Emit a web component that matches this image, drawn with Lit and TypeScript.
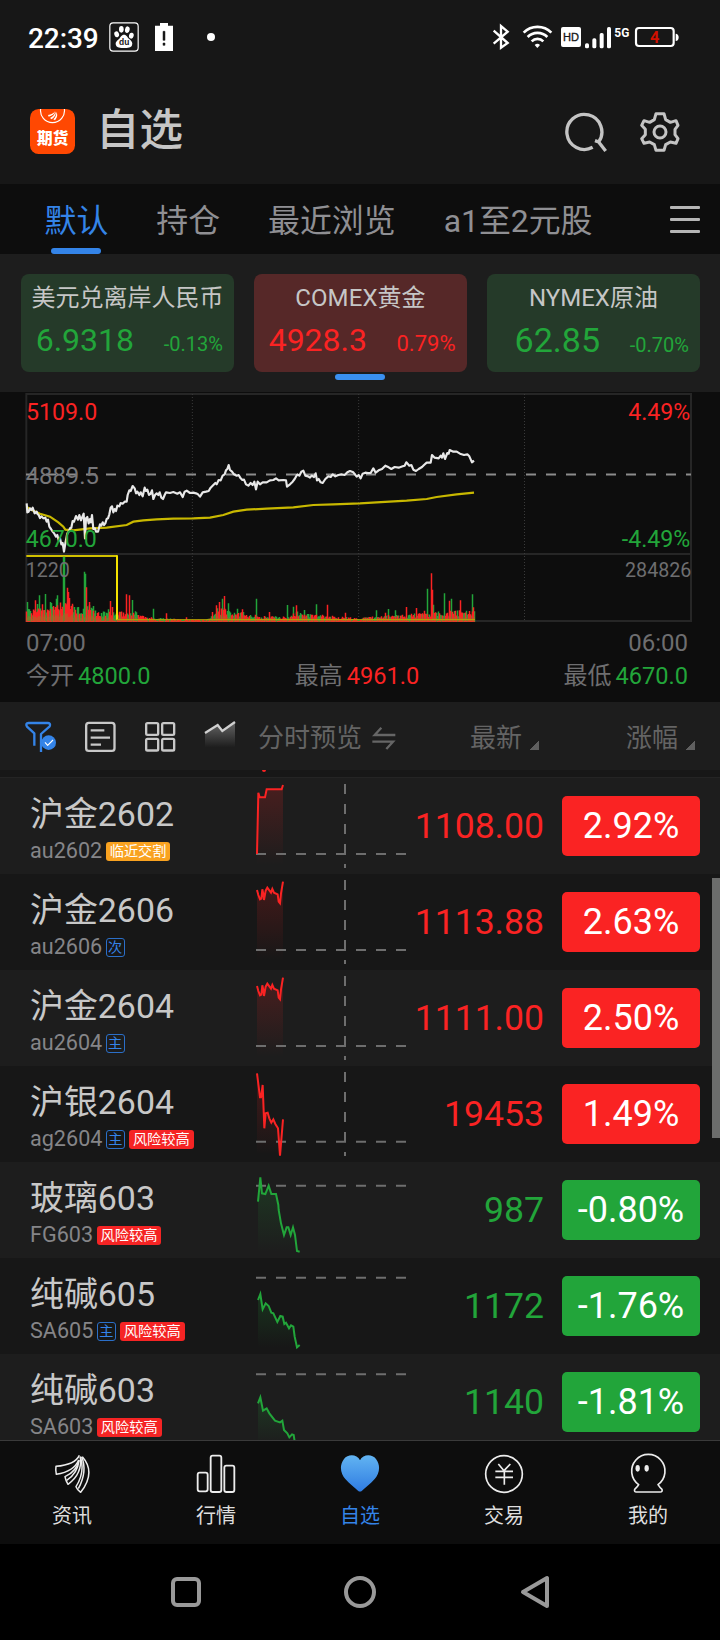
import { LitElement, html, svg, css } from "lit";
import { customElement, property } from "lit/decorators.js";

const RED = "#fa2323";
const GREEN = "#22a53a";

const fontBase = css`
  :host {
    font-family: Roboto, "Noto Sans CJK SC", sans-serif;
    -webkit-font-smoothing: antialiased;
  }
  * { box-sizing: border-box; }
  svg { display: block; flex: none; }
`;

/* ---------- status bar ---------- */
@customElement("status-bar")
export class StatusBar extends LitElement {
  static styles = [fontBase, css`
    :host { display: flex; align-items: center; height: 74px; padding: 0 40px 0 28px; color: #fff; }
    .time { font-size: 28px; font-weight: 500; line-height: 40px; width: 81px; padding-top: 3px; letter-spacing: -0.1px; }
    .right { margin: 2px 0 0 auto; }
    .word { font-family: "Liberation Sans", sans-serif; }
    .cell { font-family: Roboto, sans-serif; font-weight: 700; }
  `];
  render() {
    return html`
      <span class="time">22:39</span>
      <svg width="30" height="30" viewBox="327 66 90 90">
        <rect x="329.500" y="68.500" width="85" height="85" rx="10" fill="none" stroke="#fff" stroke-width="3.500"></rect>
        <g fill="#fff">
          <ellipse cx="350" cy="103" rx="7" ry="9" transform="rotate(-18 350 103)"></ellipse>
          <ellipse cx="364" cy="88" rx="7" ry="10"></ellipse>
          <ellipse cx="382" cy="89" rx="7" ry="10" transform="rotate(10 382 89)"></ellipse>
          <ellipse cx="394" cy="107" rx="7" ry="9" transform="rotate(15 394 107)"></ellipse>
          <path d="M372 104c8 0 10 8 16 13 7 6 11 11 8 19-3 8-12 8-24 8s-21 0-24-8c-3-8 2-13 8-18 6-6 8-14 16-14z"></path>
        </g>
        <text class="word" x="357" y="135" font-size="25" font-weight="700" fill="#171717" textLength="31" lengthAdjust="spacingAndGlyphs">du</text>
      </svg>
      <svg width="80" height="30" viewBox="417 66 240 90">
        <path d="M465 77h15v-8h24v8h15v76h-54z" fill="#fff"></path>
        <path d="M489 94h6v27h-6zM489 129h6v7h-6z" fill="#171717" stroke="#171717" stroke-width="1.500"></path>
        <circle cx="633" cy="111" r="12" fill="#fff"></circle>
      </svg>
      <svg class="right" width="188" height="32" viewBox="396 66 564 96">
        <path d="M401 92 443 129 423 143V78l20 17-42 36" fill="none" stroke="#fff" stroke-width="7"></path>
        <g fill="none" stroke="#fff" stroke-width="8">
          <path d="M491 98a58 58 0 0 1 83 0"></path>
          <path d="M503 111a41 41 0 0 1 59 0"></path>
          <path d="M515 124a25 25 0 0 1 35 0"></path>
        </g>
        <path d="M532 144l-8-9a12 12 0 0 1 16 0z" fill="#fff"></path>
        <rect x="603" y="81" width="60" height="60" rx="6" fill="#fff"></rect>
        <text class="word" x="609" y="124" font-size="35" fill="#171717" stroke="#171717" stroke-width="1" textLength="48" lengthAdjust="spacingAndGlyphs">HD</text>
        <g fill="#fff">
          <rect x="675" y="130" width="12" height="15" rx="5"></rect>
          <rect x="697" y="115" width="12" height="30" rx="5"></rect>
          <rect x="719" y="99" width="12" height="46" rx="5"></rect>
          <rect x="741" y="81" width="12" height="64" rx="5"></rect>
        </g>
        <text class="cell" x="763" y="111" font-size="41" fill="#fff" textLength="45" lengthAdjust="spacingAndGlyphs">5G</text>
        <rect x="828" y="84" width="113" height="54" rx="9" fill="none" stroke="#fff" stroke-width="6.500"></rect>
        <path d="M947 101c12 0 12 22 0 22z" fill="#fff"></path>
        <text class="cell" x="870" y="129" font-size="49" fill="#d01000">4</text>
      </svg>`;
  }
}

/* ---------- title bar ---------- */
@customElement("title-bar")
export class TitleBar extends LitElement {
  static styles = [fontBase, css`
    :host { display: flex; align-items: center; height: 110px; padding: 0 39px 0 30px; }
    .logo { margin-top: 5px; }
    .seal { font-family: "Noto Sans CJK SC", sans-serif; font-weight: 900; }
    h1 { margin: 3px 0 0 21px; font-size: 43.500px; line-height: 60px; font-weight: 500; color: #c6c6c6; }
    .tools { margin: 6px 0 0 auto; display: flex; gap: 32px; }
  `];
  render() {
    return html`
      <svg class="logo" width="45" height="45" viewBox="90 327 135 135">
        <rect x="90" y="327" width="135" height="135" rx="26" fill="#ff4802"></rect>
        <path d="M122 326a36 36 0 1 0 71 0" fill="none" stroke="#fff" stroke-width="3.500"></path>
        <path d="M144 345q14-1 21-11-3 13-19 16zM150 354q14-6 17-20 2 14-12 24zM160 358q10-10 9-23 7 11-4 26z" fill="#fff"></path>
        <text class="seal" x="111" y="433" font-size="47" fill="#fff">期货</text>
      </svg>
      <h1>自选</h1>
      <div class="tools">
        <svg width="42" height="42" viewBox="613 333 126 126" fill="none" stroke="#c4c4c4" stroke-width="10">
          <path d="M696 442a52.500 52.500 0 1 1 18-16M703 422l11 4 21 27" stroke-linejoin="round"></path>
        </svg>
        <svg width="42" height="42" viewBox="837 333 126 126" fill="none" stroke="#c4c4c4" stroke-width="9" stroke-linejoin="round">
          <path d="M888 341h24l5 18 14 8 17-5 6 14-9 12v16l9 12-6 14-17-4-14 8-5 17h-24l-5-17-14-8-17 4-7-14 11-12v-16l-11-12 7-14 17 5 14-8z"></path>
          <circle cx="900" cy="396" r="18"></circle>
        </svg>
      </div>`;
  }
}

/* ---------- group tabs ---------- */
@customElement("group-tabs")
export class GroupTabs extends LitElement {
  static styles = [fontBase, css`
    :host { display: flex; height: 70px; background: #0d0d0d; padding: 0 20px 0 20.500px; }
    .tab { display: flex; flex-direction: column; align-items: center; justify-content: flex-end; padding: 0 24px; font-size: 31.900px; color: #8f8f93; }
    .tab span { line-height: 46px; white-space: nowrap; }
    .bar { width: 50px; height: 6px; border-radius: 3px; margin-top: 4px; }
    .on { color: #3484e8; }
    .on .bar { background: #3484e8; }
    .menu { margin: 22px 0 0 auto; display: grid; gap: 9px; align-content: start; }
    .menu i { display: block; width: 30px; height: 3px; border-radius: 1px; background: #b5b5b5; }
  `];
  render() {
    const tabs = ["默认", "持仓", "最近浏览", "a1至2元股"];
    return html`
      ${tabs.map((t, i) => html`<div class="tab ${i === 0 ? "on" : ""}"><span>${t}</span><div class="bar"></div></div>`)}
      <div class="menu"><i></i><i></i><i></i></div>`;
  }
}

/* ---------- market cards ---------- */
@customElement("market-cards")
export class MarketCards extends LitElement {
  static styles = [fontBase, css`
    :host { display: grid; grid-template-columns: repeat(3, 213px); column-gap: 20px; height: 138px; padding: 20px 20px 0 21px; background: #1d1d1d; align-content: start; }
    .card { height: 98px; border-radius: 8px; padding-top: 4px; }
    .card.down { background: #253a29; color: #22a53a; }
    .card.up { background: #562828; color: #fa2323; }
    .title { text-align: center; font-size: 24px; line-height: 40px; color: #c6c6c6; white-space: nowrap; }
    .up .title { letter-spacing: 0.100px; }
    .row { display: flex; align-items: baseline; justify-content: space-between; margin-top: 2px; padding-right: 11px; line-height: 40px; }
    .up .row { padding-right: 11.500px; }
    .value { width: 113px; text-align: right; font-size: 32px; }
    .pct { font-size: 20px; }
    .big { font-size: 34px; }
    .mid { font-size: 22px; }
    .bar { grid-column: 2; justify-self: center; width: 50px; height: 6px; border-radius: 3px; background: #3a90f0; margin: 2px 1px 0 0; }
  `];
  render() {
    return html`
      <div class="card down"><div class="title">美元兑离岸人民币</div>
        <div class="row"><span class="value">6.9318</span><span class="pct">-0.13%</span></div></div>
      <div class="card up"><div class="title">COMEX黄金</div>
        <div class="row"><span class="value">4928.3</span><span class="pct mid">0.79%</span></div></div>
      <div class="card down"><div class="title">NYMEX原油</div>
        <div class="row"><span class="value big">62.85</span><span class="pct">-0.70%</span></div></div>
      <div class="bar"></div>`;
  }
}

/* ---------- intraday chart ---------- */
// Plot coordinates: three units per pixel, origin at the left edge of the page.
const PRICE = "80,355 82,382 86,380 90,370 94,375 98,368 104,385 110,380 112,386 116,390 120,399 124,394 130,400 136,398 140,410 144,404 148,425 153,432 158,440 163,446 168,455 172,450 176,466 180,460 184,478 188,474 192,500 196,475 198,465 202,445 206,440 210,430 214,428 218,408 222,410 228,393 234,404 238,390 243,406 246,398 251,386 255,460 258,400 262,396 266,415 270,402 273,412 276,390 280,432 285,430 288,440 294,440 300,418 304,422 308,412 312,420 316,415 320,402 324,400 328,388 332,368 336,364 340,382 344,372 348,378 352,362 358,364 362,354 368,356 374,350 380,350 383,330 388,316 392,318 398,303 404,310 408,325 412,320 418,330 422,322 428,334 434,308 438,318 442,314 447,330 452,326 456,316 460,342 465,330 470,325 475,330 479,322 484,338 489,342 494,330 498,322 510,324 520,321 532,326 540,322 548,336 554,320 560,317 570,324 580,323 588,325 594,328 600,335 608,322 618,320 626,318 632,308 640,300 646,294 650,298 656,285 662,286 668,272 674,268 678,256 682,252 686,240 690,255 696,260 702,268 710,272 716,270 722,280 727,285 732,284 738,298 745,302 752,294 758,300 763,290 768,313 773,290 780,298 788,292 800,292 810,286 820,285 828,280 836,286 850,285 858,286 861,305 870,298 878,290 884,282 892,268 898,272 904,260 910,257 916,272 924,274 930,278 935,272 942,276 947,265 951,286 956,282 962,292 968,294 976,282 985,274 992,276 998,268 1006,274 1015,270 1024,268 1034,270 1042,262 1050,258 1060,262 1070,275 1076,270 1082,280 1088,266 1096,263 1104,264 1112,264 1120,250 1127,263 1136,256 1146,252 1156,242 1166,247 1174,252 1184,246 1196,248 1208,244 1214,242 1219,232 1228,242 1234,240 1240,254 1248,258 1256,252 1266,246 1272,240 1280,233 1292,233 1296,210 1304,218 1316,220 1322,212 1326,218 1330,205 1335,222 1342,204 1346,206 1349,195 1360,200 1370,200 1380,206 1392,210 1402,208 1408,214 1416,232 1422,227";
const AVERAGE = "80,366 100,377 120,386 150,395 175,412 190,425 196,434 220,436 270,430 320,428 380,420 400,410 430,406 470,403 520,401 580,400 630,398 670,390 700,380 740,374 800,371 880,367 940,360 1000,358 1080,355 1130,352 1220,347 1280,342 1310,336 1370,328 1422,323";

const ENVELOPE: [number, number][] = [
  [78, 45], [100, 35], [120, 55], [160, 56], [190, 64], [215, 52], [250, 38], [270, 50], [300, 27], [330, 38], [350, 30], [380, 30],
  [410, 32], [440, 14], [500, 13], [560, 6], [620, 8], [650, 44], [700, 36], [740, 28], [780, 18], [860, 16], [890, 32], [920, 25],
  [1000, 18], [1080, 12], [1180, 22], [1280, 28], [1340, 32], [1424, 36],
];
const PEAKS: [number, number, string][] = [
  [81, 60, "g"], [106, 65, "r"], [112, 54, "g"], [118, 80, "g"], [136, 84, "g"], [152, 60, "g"], [168, 70, "g"], [173, 80, "g"],
  [189, 196, "g"], [192, 196, "g"], [201, 103, "r"], [205, 90, "r"], [209, 72, "r"], [216, 55, "r"], [254, 151, "g"], [257, 145, "g"],
  [260, 104, "r"], [269, 60, "r"], [279, 48, "g"], [331, 63, "r"], [337, 45, "r"], [380, 83, "r"], [387, 80, "r"], [396, 66, "g"],
  [461, 40, "g"], [500, 26, "r"], [558, 14, "r"], [636, 30, "r"], [648, 50, "r"], [658, 60, "r"], [668, 70, "g"], [673, 78, "r"],
  [685, 56, "g"], [711, 40, "g"], [727, 38, "r"], [768, 70, "g"], [809, 30, "r"], [861, 51, "g"], [880, 46, "g"], [890, 50, "r"],
  [912, 36, "g"], [949, 53, "g"], [981, 52, "r"], [1035, 28, "r"], [1128, 35, "g"], [1156, 28, "r"], [1164, 39, "g"], [1186, 35, "g"],
  [1218, 45, "r"], [1250, 42, "r"], [1272, 34, "r"], [1281, 100, "g"], [1293, 146, "r"], [1297, 97, "r"], [1301, 52, "g"],
  [1332, 86, "g"], [1349, 64, "r"], [1355, 70, "g"], [1381, 65, "r"], [1417, 83, "g"], [1421, 44, "r"],
];

function noise(i: number) {
  const v = Math.sin(i * 12.9898 + 4.1) * 43758.5453;
  return v - Math.floor(v);
}
function envelope(x: number) {
  for (let k = 1; k < ENVELOPE.length; k++) {
    const [x1, h1] = ENVELOPE[k];
    if (x <= x1) {
      const [x0, h0] = ENVELOPE[k - 1];
      return h0 + ((h1 - h0) * (x - x0)) / (x1 - x0);
    }
  }
  return 30;
}
function volume() {
  let r = "", g = "", o = "";
  for (let x = 79.5, i = 0; x < 1425; x += 3, i++) {
    const h = Math.max(7, envelope(x) * (0.5 + 0.55 * noise(i)));
    const bar = `M${x} 711v-${h.toFixed(1)}`;
    if (noise(i + 900) > 0.5) r += bar; else g += bar;
    o += `M${x} 711v-${(h * 0.45).toFixed(1)}`;
  }
  for (const [x, h, c] of PEAKS) {
    const px = Math.round((x - 79.5) / 3) * 3 + 79.5;
    const bar = `M${px} 711v-${h}`;
    if (c === "r") r += bar; else g += bar;
  }
  return { r, g, o };
}

@customElement("intraday-chart")
export class IntradayChart extends LitElement {
  static styles = [fontBase, css`
    :host { display: flex; flex-direction: column; height: 310px; background: #0d0d0d; }
    .lbl { font-family: Roboto, sans-serif; }
    .line { display: flex; justify-content: space-between; padding: 0 32px 0 26px; font-size: 24px; color: #6e6e70; line-height: 33px; }
    .times { padding-top: 1px; }
    .pair { display: flex; gap: 4px; }
    .num { font-size: 23.600px; }
    .up { color: #fa2323; }
    .down { color: #22a53a; }
  `];
  render() {
    const v = volume();
    return html`
      <svg width="720" height="234" viewBox="0 21 2160 702">
        <g fill="none" stroke="#262626" stroke-width="6">
          <path d="M79 27H2073V708H79zM79 507H2073"></path>
        </g>
        <path d="M577 27V708M1076 27V708M1573.500 27V708" stroke="#3a3a3a" stroke-width="3" stroke-dasharray="3 6"></path>
        <path d="M78 268.500H2073" stroke="#8c8c8c" stroke-width="6" stroke-dasharray="30 30"></path>
        <polyline points=${AVERAGE} fill="none" stroke="#c8b800" stroke-width="6.500"></polyline>
        <path d="M79 513H351" fill="none" stroke="#d0c000" stroke-width="6"></path>
        <path d=${v.g} stroke=${GREEN} stroke-width="4.500"></path>
        <path d=${v.r} stroke=${RED} stroke-width="4.500"></path>
        <path d=${v.o} stroke="#a86a28" stroke-width="3" opacity="0.550"></path>
        <path d="M351 511V704" fill="none" stroke="#f4e200" stroke-width="6"></path>
        <path d="M351 704H1425" fill="none" stroke="#b8a800" stroke-width="4" opacity="0.800"></path>
        <path d="M79 709.500H1425" stroke="#e83828" stroke-width="3" stroke-dasharray="12 4"></path>
        <polyline points=${PRICE} fill="none" stroke="#e8e8e8" stroke-width="6.500" stroke-linejoin="round"></polyline>
        <g class="lbl" font-size="69.500">
          <text x="78" y="104" fill=${RED}>5109.0</text>
          <text x="77" y="297" font-size="71.500" fill="#77777a">4889.5</text>
          <text x="77" y="486" fill=${GREEN}>4670.0</text>
          <text x="2071" y="104" text-anchor="end" fill=${RED}>4.49%</text>
          <text x="2071" y="486" text-anchor="end" fill=${GREEN}>-4.49%</text>
        </g>
        <g class="lbl" font-size="59" fill="#6e6e70">
          <text x="77" y="577">1220</text>
          <text x="2074" y="577" text-anchor="end">284826</text>
        </g>
      </svg>
      <div class="line times"><span>07:00</span><span>06:00</span></div>
      <div class="line">
        <span class="pair">今开<span class="num down">4800.0</span></span>
        <span class="pair">最高<span class="num up">4961.0</span></span>
        <span class="pair">最低<span class="num down">4670.0</span></span>
      </div>`;
  }
}

/* ---------- list toolbar ---------- */
@customElement("list-toolbar")
export class ListToolbar extends LitElement {
  static styles = [fontBase, css`
    :host { display: flex; align-items: center; height: 68px; padding: 0 24px; background: #1d1d1d; font-size: 26px; color: #646464; }
    .icons { display: flex; gap: 28px; margin-right: 22px; }
    .label { line-height: 40px; margin-top: 4px; white-space: nowrap; }
    .swap { margin: 4px 0 0 10px; }
    .sort { display: flex; align-items: center; gap: 7px; }
    .sort i { width: 10px; height: 10px; margin-top: 18px; background: linear-gradient(135deg, transparent 50%, #5f5f5f 50%); }
    .latest { margin-left: auto; width: 70px; }
    .change { margin-left: 86px; width: 70px; }
  `];
  render() {
    return html`
      <div class="icons">
        <svg width="32" height="32" viewBox="72 62 96 96" fill="none" stroke="#3484e8" stroke-width="7" stroke-linejoin="round">
          <path d="M103 139V102L81 82q-6-10 5-11h58q9 1 5 10L123 104v54"></path>
          <circle cx="146" cy="130" r="22" fill="#3484e8" stroke="none"></circle>
          <path d="M135 129l8 9 16-16" stroke="#fff" stroke-width="3.500"></path>
        </svg>
        <svg width="32" height="32" viewBox="252 62 96 96" fill="none" stroke="#c8c8c8" stroke-width="7">
          <rect x="258.500" y="70.500" width="85" height="84" rx="8"></rect>
          <path d="M272 93h41M272 115h58M272 136h31"></path>
        </svg>
        <svg width="32" height="32" viewBox="432 62 96 96" fill="none" stroke="#c8c8c8" stroke-width="7">
          <rect x="438.500" y="71.500" width="36" height="35" rx="4"></rect><rect x="486.500" y="71.500" width="36" height="35" rx="4"></rect>
          <rect x="438.500" y="118.500" width="36" height="35" rx="4"></rect><rect x="486.500" y="118.500" width="36" height="35" rx="4"></rect>
        </svg>
        <svg width="32" height="32" viewBox="612 62 96 96">
          <defs><linearGradient id="tg" x1="0" y1="0" x2="0" y2="1"><stop offset="0" stop-color="#666"></stop><stop offset="1" stop-color="#1d1d1d"></stop></linearGradient></defs>
          <path d="M615 101l38-24 14 18 38-27v76h-90z" fill="url(#tg)"></path>
          <path d="M615 101l38-24 14 18 38-27" fill="none" stroke="#d0d0d0" stroke-width="7"></path>
        </svg>
      </div>
      <span class="label">分时预览</span>
      <svg class="swap" width="24" height="24" viewBox="1115 77 72 72" fill="none" stroke="#666" stroke-width="7">
        <path d="M1185 104h-62l20-22M1116 124h62l-20 22"></path>
      </svg>
      <div class="sort latest"><span class="label">最新</span><i></i></div>
      <div class="sort change"><span class="label">涨幅</span><i></i></div>`;
  }
}

/* ---------- quote rows ---------- */
interface Quote {
  name: string; code: string; tags: string[]; price: string; pct: string;
  up: boolean; ref: number; mid: boolean; line: string; floor: number;
}
const GOLD = "3,48 7,63 12,76 16,74 19,46 22,60 24,78 29,50 34,41 40,49 45,56 49,45 54,56 65,61 68,83 72,88 75,58 81,23";
const QUOTES: Quote[] = [
  { name: "沪金2602", code: "au2602", tags: ["临近交割"], price: "1108.00", pct: "2.92%", up: true, ref: 228, mid: true, floor: 260,
    line: "3,228 7,44 11,58 27,58 32,34 77,34 81,21" },
  { name: "沪金2606", code: "au2606", tags: ["次"], price: "1113.88", pct: "2.63%", up: true, ref: 228, mid: true, floor: 260, line: GOLD },
  { name: "沪金2604", code: "au2604", tags: ["主"], price: "1111.00", pct: "2.50%", up: true, ref: 228, mid: true, floor: 260, line: GOLD },
  { name: "沪银2604", code: "ag2604", tags: ["主", "风险较高"], price: "19453", pct: "1.49%", up: true, ref: 227, mid: true, floor: 260,
    line: "3,22 12,94 15,94 20,57 25,187 29,142 35,140 40,157 46,170 52,160 58,174 66,187 72,269 81,160" },
  { name: "玻璃603", code: "FG603", tags: ["风险较高"], price: "987", pct: "-0.80%", up: false, ref: 71, mid: false, floor: 269,
    line: "6,119 13,46 18,94 28,96 38,71 46,96 60,96 67,129 68,144 75,184 84,219 92,196 97,196 104,219 111,196 117,219 123,267 131,269" },
  { name: "纯碱605", code: "SA605", tags: ["主", "风险较高"], price: "1172", pct: "-1.76%", up: false, ref: 59, mid: false, floor: 269,
    line: "6,126 13,108 20,154 29,136 38,144 46,164 52,166 64,192 73,174 80,176 85,198 90,194 99,211 105,202 112,206 116,236 123,268 131,261" },
  { name: "纯碱603", code: "SA603", tags: ["风险较高"], price: "1140", pct: "-1.81%", up: false, ref: 61, mid: false, floor: 269,
    line: "6,148 13,130 21,170 32,163 40,178 57,200 72,205 79,200 84,228 94,238 100,250 108,241 113,243 116,262" },
];

@customElement("quote-row")
export class QuoteRow extends LitElement {
  @property({ attribute: false }) quote!: Quote;
  static styles = [fontBase, css`
    :host { display: grid; grid-template-columns: 226px 150px 138px 138px; height: 96px; padding-left: 30px; flex: none; }
    .info { padding-top: 14px; }
    .name { font-size: 33.900px; line-height: 45px; color: #c8c8c8; white-space: nowrap; }
    .meta { display: flex; align-items: flex-start; height: 26px; gap: 4px; }
    .code { font-size: 21.600px; line-height: 24px; color: #858588; padding-top: 2px; }
    .tag { margin-top: 5px; height: 19px; line-height: 19px; font-size: 14.200px; padding: 0 4px; border-radius: 3px; color: #fff; white-space: nowrap; }
    .near { background: #f9a220; }
    .risk { background: #f52424; }
    .mark { width: 19px; padding: 0; border: 1px solid #2b6fc8; color: #3484e8; text-align: center; line-height: 17px; }
    .code + .tag { margin-left: -0.500px; }
    .price { align-self: center; text-align: right; font-size: 35.600px; line-height: 48px; }
    .badge { align-self: center; margin-left: 18px; width: 138px; height: 60px; border-radius: 5px; color: #fff; font-size: 36px; line-height: 60px; text-align: center; }
    .red { color: #fa2323; }
    .green { color: #22a53a; }
    .bgred { background: #fa2323; }
    .bggreen { background: #22a53a; }
  `];
  render() {
    const q = this.quote;
    const color = q.up ? RED : GREEN;
    const pts = q.line.split(" ");
    const area = `M${pts.join("L")}L${pts[pts.length - 1].split(",")[0]},${q.floor}L${pts[0].split(",")[0]},${q.floor}Z`;
    return html`
      <div class="info">
        <div class="name">${q.name}</div>
        <div class="meta"><span class="code">${q.code}</span>
          ${q.tags.map((t) => html`<span class="tag ${t.length === 1 ? "mark" : t === "临近交割" ? "near" : "risk"}">${t}</span>`)}
        </div>
      </div>
      <svg width="150" height="96" viewBox="0 0 450 288">
        <defs><linearGradient id="a" x1="0" y1="0" x2="0" y2="1">
          <stop offset="0" stop-color=${color} stop-opacity="0.200"></stop><stop offset="1" stop-color=${color} stop-opacity="0"></stop>
        </linearGradient></defs>
        <path d=${area} fill="url(#a)"></path>
        <path d="M0 ${q.ref}H450" stroke="#6e6e6e" stroke-width="6" stroke-dasharray="30 30"></path>
        ${q.mid ? svg`<path d="M267 18V270" stroke="#6e6e6e" stroke-width="6" stroke-dasharray="30 30"></path>` : ""}
        <polyline points=${q.line} fill="none" stroke=${color} stroke-width="6"></polyline>
      </svg>
      <span class="price ${q.up ? "red" : "green"}">${q.price}</span>
      <span class="badge ${q.up ? "bgred" : "bggreen"}">${q.pct}</span>`;
  }
}

@customElement("quote-list")
export class QuoteList extends LitElement {
  static styles = [fontBase, css`
    :host { display: flex; flex-direction: column; position: relative; height: 670px; overflow: hidden; background: #171717; }
    .prev { height: 8px; flex: none; border-bottom: 1px solid #242424; padding-left: 262px; }
    .prev i { display: block; width: 4px; height: 2px; border-radius: 0 0 2px 2px; background: #fa2323; }
    .odd { background: #1d1d1d; }
    .thumb { position: absolute; right: 0; top: 108px; width: 8px; height: 260px; background: #6c6d6c; }
  `];
  render() {
    return html`
      <div class="prev"><i></i></div>
      ${QUOTES.map((q, i) => html`<quote-row class=${i % 2 ? "even" : "odd"} .quote=${q}></quote-row>`)}
      <div class="thumb"></div>`;
  }
}

/* ---------- bottom navigation ---------- */
@customElement("app-nav")
export class AppNav extends LitElement {
  static styles = [fontBase, css`
    :host { display: grid; grid-template-columns: repeat(5, 1fr); height: 104px; background: #0d0d0d; border-top: 1px solid #3a3a3a; }
    .item { display: flex; flex-direction: column; align-items: center; padding-top: 12px; font-size: 20px; color: #dedede; }
    .item span { line-height: 28px; margin-top: 7px; }
    .on { color: #3484e8; }
  `];
  render() {
    const s = "#ececec";
    return html`
      <div class="item">
        <svg width="42" height="42" viewBox="153 69 126 126" fill="none" stroke=${s} stroke-width="4.500" stroke-linejoin="round">
          <path d="M238 76c-10 22-34 30-70 33q-2 12 1 24c36-6 58-20 67-43"></path>
          <path d="M237 90c-5 26-20 40-42 50q2 12 9 23c28-20 42-46 37-83"></path>
          <path d="M200 151c22-14 34-32 37-60"></path>
          <path d="M241 80c12 36 2 66-13 90q4 10 14 17c28-36 36-72 5-107"></path>
          <path d="M245 80c14 34 6 66-10 96"></path>
        </svg><span>资讯</span></div>
      <div class="item">
        <svg width="42" height="42" viewBox="585 69 126 126" fill="none" stroke=${s} stroke-width="5.500">
          <rect x="593" y="128" width="30" height="56" rx="6"></rect>
          <rect x="632" y="77" width="32" height="109" rx="6"></rect>
          <rect x="673" y="107" width="30" height="79" rx="6"></rect>
        </svg><span>行情</span></div>
      <div class="item on">
        <svg width="42" height="42" viewBox="1017 69 126 126">
          <defs><linearGradient id="h" x1="0" y1="0" x2="0" y2="1"><stop offset="0" stop-color="#62b4f2"></stop><stop offset="1" stop-color="#2f7ce2"></stop></linearGradient></defs>
          <path d="M1080 91C1089 72 1116 71 1128 87c16 22 9 44-4 60-13 15-28 26-38 35q-6 5-12 0c-10-9-25-20-38-35-13-16-20-38-4-60 12-16 39-15 48 4z" fill="url(#h)"></path>
        </svg><span>自选</span></div>
      <div class="item">
        <svg width="42" height="42" viewBox="369 69 126 126" fill="none" stroke=${s} stroke-width="5">
          <circle cx="432" cy="132" r="55"></circle>
          <path d="M415 102l17 20 19-20M406 124h53M406 142h53M433 122v42"></path>
        </svg><span>交易</span></div>
      <div class="item">
        <svg width="42" height="42" viewBox="800 69 126 126" fill="none" stroke=${s} stroke-width="5" stroke-linejoin="round">
          <path d="M835 164a50 50 0 1 1 58 0q5 8 12 14 2 8-5 8h-72q-7 0-5-8 9-8 12-14z"></path>
          <ellipse cx="832" cy="115" rx="6.500" ry="10" fill=${s} stroke="none"></ellipse>
          <ellipse cx="859" cy="115" rx="6.500" ry="10" fill=${s} stroke="none"></ellipse>
        </svg><span>我的</span></div>`;
  }
}

@customElement("system-nav")
export class SystemNav extends LitElement {
  static styles = [fontBase, css`
    :host { display: flex; align-items: center; justify-content: center; gap: 140px; height: 96px; background: #000; }
  `];
  render() {
    return html`
      <svg width="36" height="36" viewBox="0 0 36 36" fill="none" stroke="#999" stroke-width="4"><rect x="7" y="5" width="26" height="26" rx="4"></rect></svg>
      <svg width="36" height="36" viewBox="0 0 36 36" fill="none" stroke="#999" stroke-width="4"><circle cx="18" cy="18" r="14"></circle></svg>
      <svg width="36" height="36" viewBox="0 0 36 36" fill="none" stroke="#999" stroke-width="4" stroke-linejoin="round"><path d="M29 4V32L5 18z"></path></svg>`;
  }
}

@customElement("app-root")
export class AppRoot extends LitElement {
  static styles = [fontBase, css`
    :host { display: flex; flex-direction: column; width: 720px; height: 1640px; background: #171717; overflow: hidden; }
    :host > * { flex: none; }
  `];
  render() {
    return html`
      <status-bar></status-bar>
      <title-bar></title-bar>
      <group-tabs></group-tabs>
      <market-cards></market-cards>
      <intraday-chart></intraday-chart>
      <list-toolbar></list-toolbar>
      <quote-list></quote-list>
      <app-nav></app-nav>
      <system-nav></system-nav>`;
  }
}
